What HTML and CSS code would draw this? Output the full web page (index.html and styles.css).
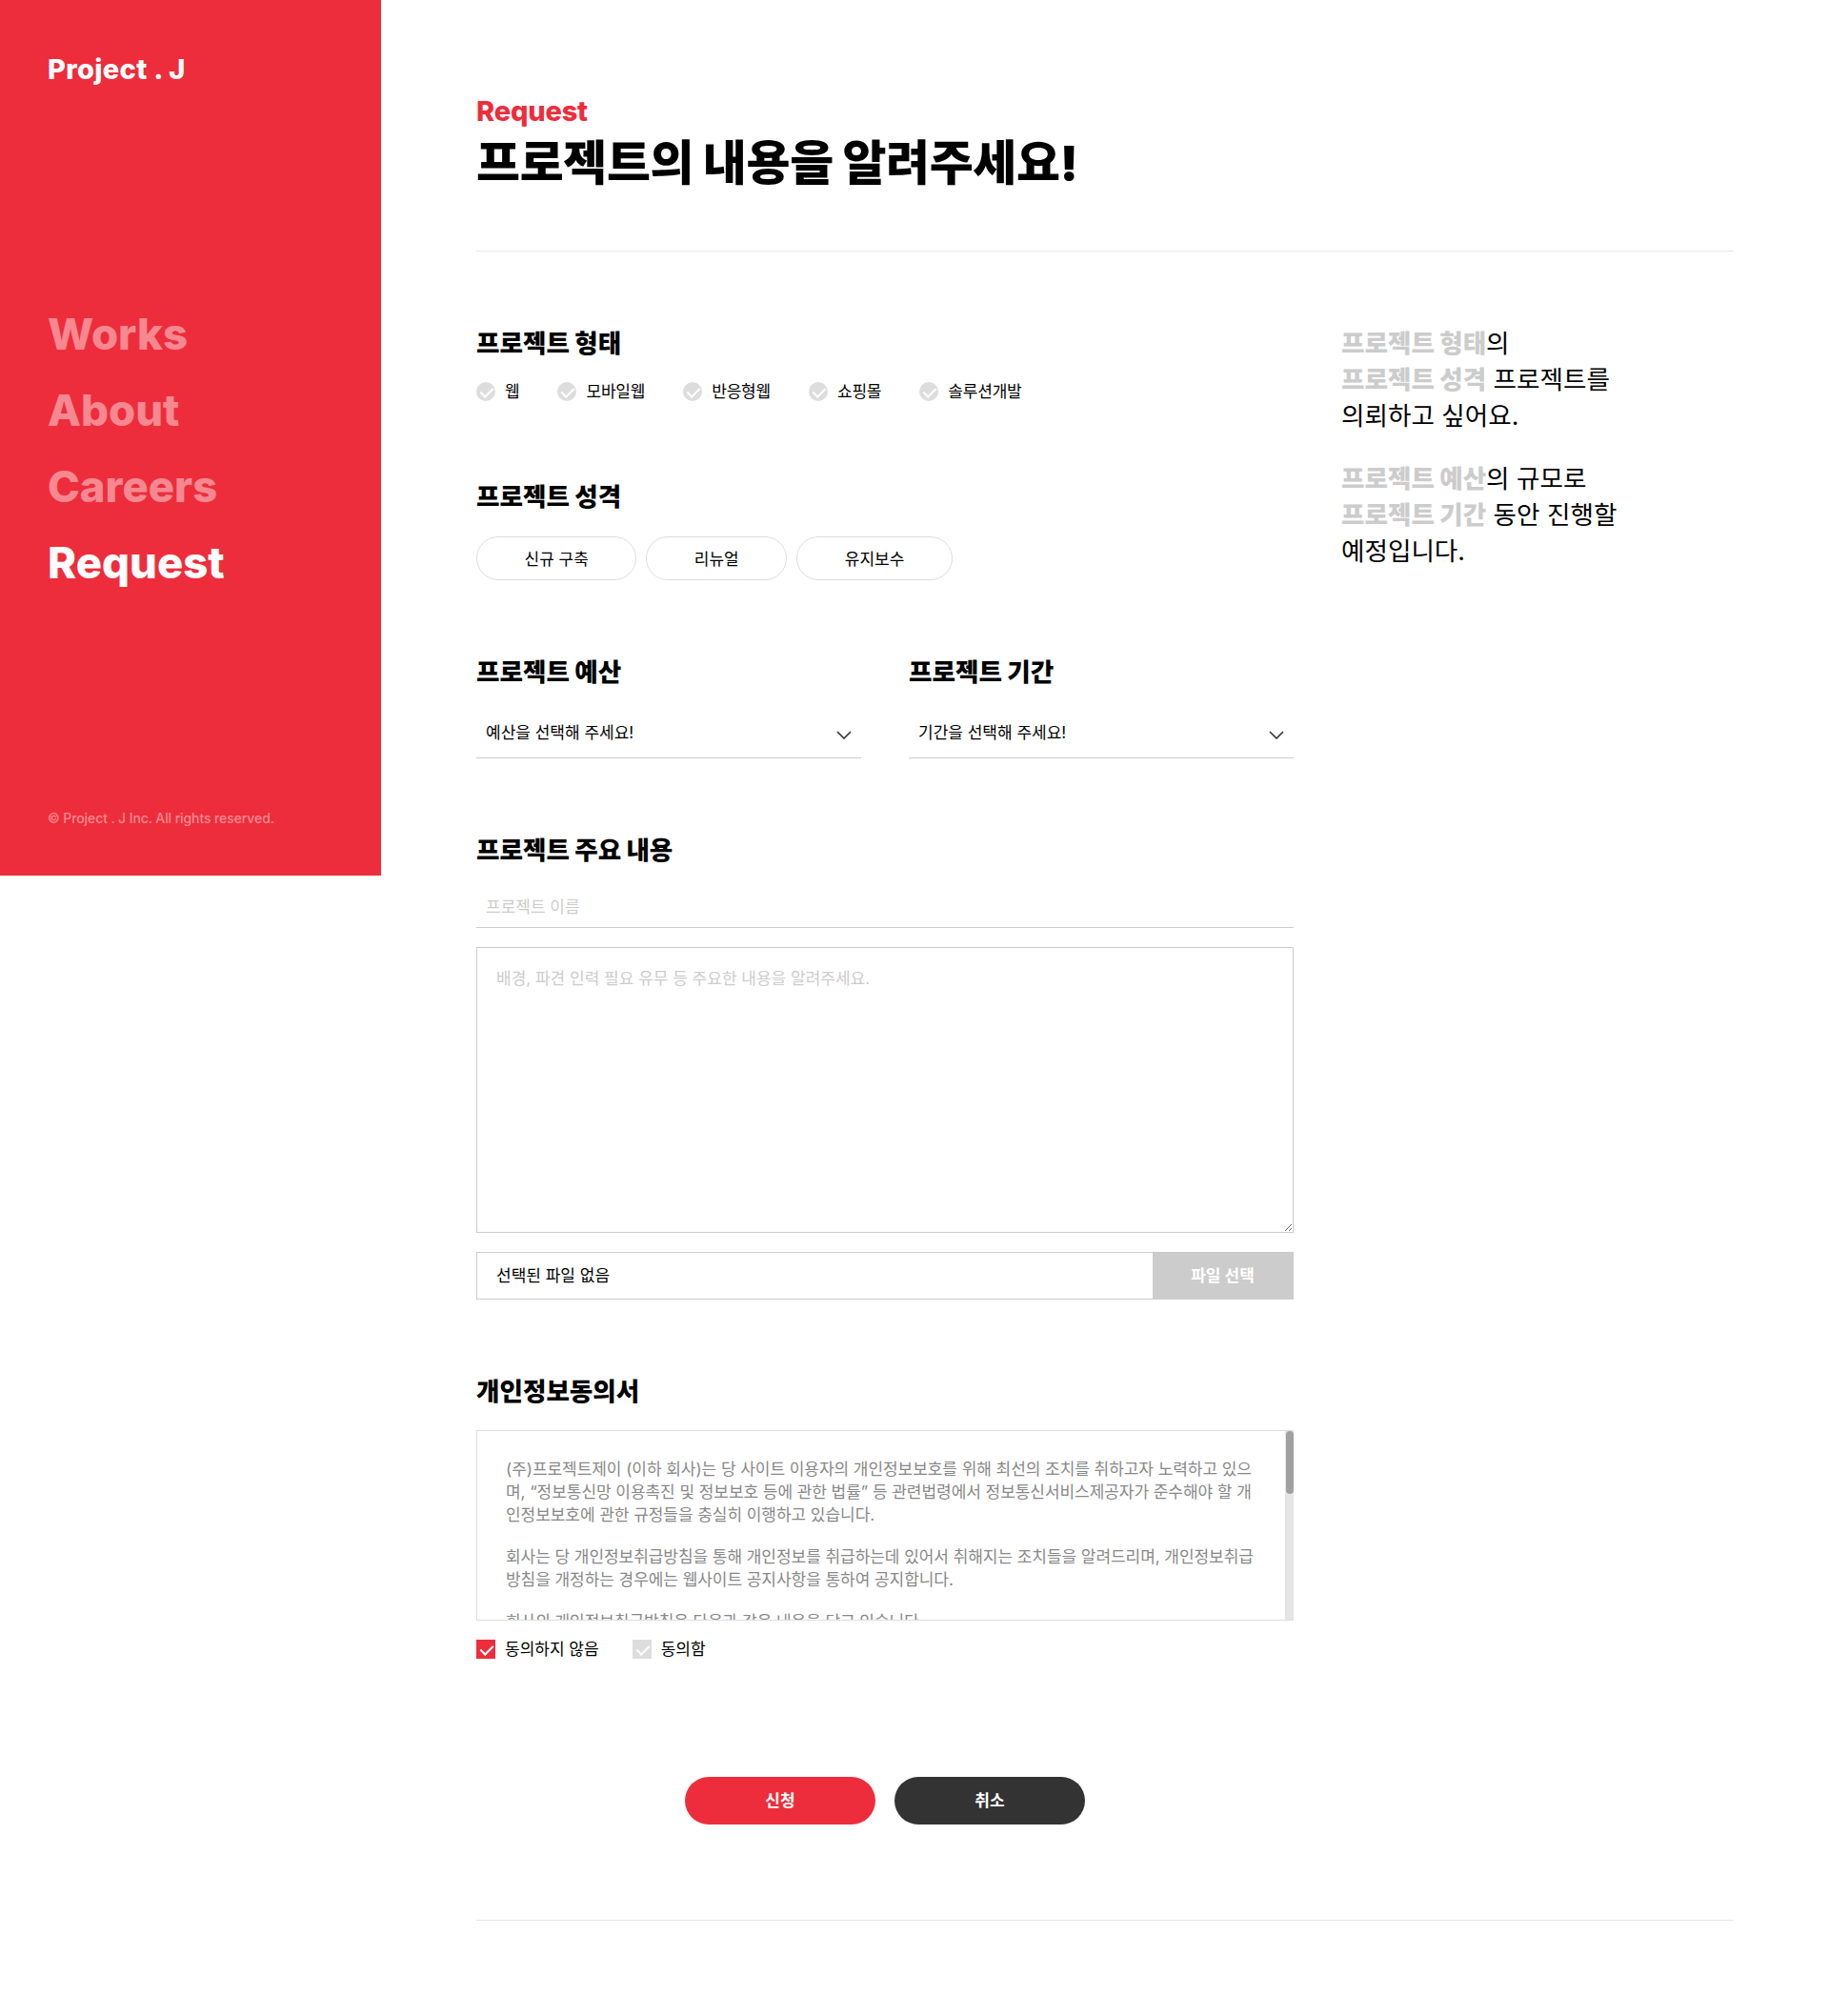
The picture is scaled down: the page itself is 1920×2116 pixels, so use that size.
FILE: index.html
```html
<!DOCTYPE html>
<html lang="ko">
<head>
    <meta charset="UTF-8">
    <meta name="viewport" content="width=device-width, initial-scale=1.0">
    <title>Project . J - Request</title>
    <link rel="stylesheet" href="styles.css">
</head>
<body>
    <div class="wrap">
        <aside class="sidebar">
            <a href="#" class="logo">Project . J</a>
            <nav class="gnb">
                <a href="#">Works</a>
                <a href="#">About</a>
                <a href="#">Careers</a>
                <a href="#" class="on">Request</a>
            </nav>
            <p class="copyright">© Project . J Inc. All rights reserved.</p>
        </aside>

        <main class="content">
            <header class="page-head">
                <p class="page-label">Request</p>
                <h1>프로젝트의 내용을 알려주세요!</h1>
            </header>

            <div class="columns">
                <form class="request-form">
                    <section class="field">
                        <h3>프로젝트 형태</h3>
                        <div class="radio-row">
                            <label class="radio"><input type="checkbox"><span class="mark"></span>웹</label>
                            <label class="radio"><input type="checkbox"><span class="mark"></span>모바일웹</label>
                            <label class="radio"><input type="checkbox"><span class="mark"></span>반응형웹</label>
                            <label class="radio"><input type="checkbox"><span class="mark"></span>쇼핑몰</label>
                            <label class="radio"><input type="checkbox"><span class="mark"></span>솔루션개발</label>
                        </div>
                    </section>

                    <section class="field">
                        <h3>프로젝트 성격</h3>
                        <div class="pill-row">
                            <button type="button" class="pill">신규 구축</button>
                            <button type="button" class="pill">리뉴얼</button>
                            <button type="button" class="pill">유지보수</button>
                        </div>
                    </section>

                    <section class="field field-half">
                        <div>
                            <h3>프로젝트 예산</h3>
                            <div class="select-box">
                                <select>
                                    <option>예산을 선택해 주세요!</option>
                                </select>
                                <svg class="chevron" width="16" height="9" viewBox="0 0 16 9"><path d="M1 1l7 7 7-7" fill="none" stroke="#333" stroke-width="1.6"/></svg>
                            </div>
                        </div>
                        <div>
                            <h3>프로젝트 기간</h3>
                            <div class="select-box">
                                <select>
                                    <option>기간을 선택해 주세요!</option>
                                </select>
                                <svg class="chevron" width="16" height="9" viewBox="0 0 16 9"><path d="M1 1l7 7 7-7" fill="none" stroke="#333" stroke-width="1.6"/></svg>
                            </div>
                        </div>
                    </section>

                    <section class="field">
                        <h3>프로젝트 주요 내용</h3>
                        <input type="text" class="text-input" placeholder="프로젝트 이름">
                        <textarea class="text-area" placeholder="배경, 파견 인력 필요 유무 등 주요한 내용을 알려주세요."></textarea>
                        <label class="file-box">
                            <input type="file">
                            <span class="file-name">선택된 파일 없음</span>
                            <span class="file-btn">파일 선택</span>
                        </label>
                    </section>

                    <section class="field">
                        <h3>개인정보동의서</h3>
                        <div class="terms-box">
                            <div class="terms">
                                <p>(주)프로젝트제이 (이하 회사)는 당 사이트 이용자의 개인정보보호를 위해 최선의 조치를 취하고자 노력하고 있으며, “정보통신망 이용촉진 및 정보보호 등에 관한 법률” 등 관련법령에서 정보통신서비스제공자가 준수해야 할 개인정보보호에 관한 규정들을 충실히 이행하고 있습니다.</p>
                                <p>회사는 당 개인정보취급방침을 통해 개인정보를 취급하는데 있어서 취해지는 조치들을 알려드리며, 개인정보취급방침을 개정하는 경우에는 웹사이트 공지사항을 통하여 공지합니다.</p>
                                <p>회사의 개인정보취급방침은 다음과 같은 내용을 담고 있습니다.</p>
                            </div>
                            <div class="scroll-track"><div class="scroll-thumb"></div></div>
                        </div>
                        <div class="agree-row">
                            <label class="agree"><input type="radio" name="agree" checked><span class="mark"></span>동의하지 않음</label>
                            <label class="agree"><input type="radio" name="agree"><span class="mark"></span>동의함</label>
                        </div>
                    </section>

                    <div class="btn-row">
                        <button type="submit" class="btn btn-red">신청</button>
                        <button type="button" class="btn btn-dark">취소</button>
                    </div>
                </form>

                <div class="summary">
                    <p><b>프로젝트 형태</b>의<br><b>프로젝트 성격</b> 프로젝트를<br>의뢰하고 싶어요.</p>
                    <p><b>프로젝트 예산</b>의 규모로<br><b>프로젝트 기간</b> 동안 진행할<br>예정입니다.</p>
                </div>
            </div>

            <div class="bottom-line"></div>
        </main>
    </div>
</body>
</html>
```

FILE: styles.css
```css
* {
    box-sizing: border-box;
}
body {
    margin: 0;
    font-family: Inter, "Noto Sans CJK KR", sans-serif;
    color: #000;
    background-color: #fff;
}
p, h1, h3 {
    margin: 0;
}
.wrap {
    display: flex;
    align-items: flex-start;
}

/* sidebar */
.sidebar {
    width: 400px;
    height: 919px;
    flex-shrink: 0;
    padding: 52px 50px 0;
    display: flex;
    flex-direction: column;
    background-color: #ee2d3c;
    color: #fff;
}
.logo {
    color: #fff;
    font-size: 29px;
    line-height: 42px;
    font-weight: 800;
    letter-spacing: 0.35px;
    text-decoration: none;
}
.gnb {
    display: flex;
    flex-direction: column;
    margin-top: 217px;
}
.gnb a {
    color: rgba(255, 255, 255, 0.45);
    font-size: 45.5px;
    line-height: 80px;
    font-weight: 800;
    text-decoration: none;
}
.gnb a.on {
    color: #fff;
}
.copyright {
    margin-top: auto;
    margin-bottom: 50px;
    font-size: 14px;
    line-height: 20px;
    font-weight: 500;
    letter-spacing: -0.1px;
    color: rgba(255, 255, 255, 0.45);
}

/* main */
.content {
    flex: 1;
    padding: 100px;
}
.page-head {
    padding-bottom: 62px;
    border-bottom: 1px solid #e5e5e5;
}
.page-label {
    color: #ee2d3c;
    font-size: 29px;
    line-height: 34px;
    font-weight: 800;
    letter-spacing: -0.2px;
}
.page-head h1 {
    margin-top: 7px;
    font-size: 50px;
    line-height: 60px;
    font-weight: 900;
    letter-spacing: -0.35px;
}
.columns {
    display: flex;
    gap: 50px;
}
.request-form {
    width: 858px;
}
.summary {
    padding-top: 77px;
    font-size: 26.6px;
    line-height: 38px;
}
.summary p {
    margin-bottom: 28px;
}
.summary b {
    color: #ccc;
    font-weight: 900;
}

/* form fields */
.field {
    margin-top: 81px;
}
.field h3 {
    font-size: 26.6px;
    line-height: 30px;
    font-weight: 900;
}
.field-half {
    display: grid;
    grid-template-columns: 404px 404px;
    gap: 50px;
}
.radio-row {
    display: flex;
    gap: 40px;
    margin-top: 26px;
    padding-bottom: 4px;
}
.radio, .agree {
    display: flex;
    align-items: center;
    font-size: 17px;
    line-height: 20px;
}
.radio {
    letter-spacing: -0.2px;
}
.radio input, .agree input, .file-box input {
    display: none;
}
.mark {
    position: relative;
    width: 20px;
    height: 20px;
    margin-right: 10px;
    background-color: #ddd;
}
.radio .mark {
    border-radius: 50%;
}
.mark::after {
    content: "";
    position: absolute;
    left: 7px;
    top: 3px;
    width: 6px;
    height: 11px;
    border-right: 2px solid #fff;
    border-bottom: 2px solid #fff;
    transform: rotate(45deg);
}
.agree input:checked + .mark {
    background-color: #ee2d3c;
}
.pill-row {
    display: flex;
    gap: 10px;
    margin-top: 27px;
}
.pill {
    height: 46px;
    padding: 0 49.5px 2px;
    border: 1px solid #ddd;
    border-radius: 23px;
    background-color: #fff;
    color: #000;
    font-family: inherit;
    font-size: 17px;
}
.select-box {
    position: relative;
    margin-top: 26px;
}
.select-box select {
    display: block;
    width: 100%;
    height: 50px;
    padding: 0 10px 3px;
    border: none;
    border-bottom: 1px solid #ccc;
    border-radius: 0;
    appearance: none;
    background-color: #fff;
    color: #000;
    font-family: inherit;
    font-size: 17px;
}
.chevron {
    position: absolute;
    right: 10px;
    top: 21px;
    pointer-events: none;
}
.text-input {
    display: block;
    width: 100%;
    height: 50px;
    margin-top: 17px;
    padding: 6px 10px 0;
    border: none;
    border-bottom: 1px solid #ccc;
    font-family: inherit;
    font-size: 17px;
    outline: none;
}
.text-area {
    display: block;
    width: 100%;
    height: 300px;
    margin-top: 20px;
    padding: 20px;
    border: 1px solid #ccc;
    font-family: inherit;
    font-size: 17px;
    line-height: 24px;
    outline: none;
}
.text-input::placeholder, .text-area::placeholder {
    color: #ccc;
}
.file-box {
    display: flex;
    height: 50px;
    margin-top: 20px;
    border: 1px solid #ccc;
    font-size: 17px;
    line-height: 48px;
}
.file-name {
    flex: 1;
    padding-left: 20px;
}
.file-btn {
    width: 147px;
    background-color: #ccc;
    color: #fff;
    font-weight: 700;
    text-align: center;
}
.terms-box {
    position: relative;
    height: 200px;
    margin-top: 26px;
}
.terms {
    height: 100%;
    padding: 28px 30px;
    border: 1px solid #ddd;
    overflow-y: auto;
    color: #888;
    font-size: 17px;
    line-height: 24px;
    letter-spacing: -0.05px;
    word-break: break-all;
}
.terms p {
    margin-bottom: 20px;
}
.terms p:last-child {
    margin-bottom: 380px;
}
.scroll-track {
    position: absolute;
    top: 1px;
    right: 0;
    bottom: 1px;
    width: 9px;
    background-color: #e5e5e5;
}
.scroll-thumb {
    width: 8px;
    height: 66px;
    margin-left: 1px;
    border-radius: 4px;
    background-color: #a0a0a0;
}
.agree-row {
    display: flex;
    gap: 35px;
    margin-top: 20px;
}
.btn-row {
    display: flex;
    justify-content: center;
    gap: 20px;
    margin-top: 124px;
}
.btn {
    width: 200px;
    height: 50px;
    padding-bottom: 4px;
    border: none;
    border-radius: 25px;
    color: #fff;
    font-family: inherit;
    font-size: 17px;
    font-weight: 700;
}
.btn-red {
    background-color: #ee2d3c;
}
.btn-dark {
    background-color: #333;
}
.bottom-line {
    margin-top: 100px;
    border-top: 1px solid #e5e5e5;
}
```
